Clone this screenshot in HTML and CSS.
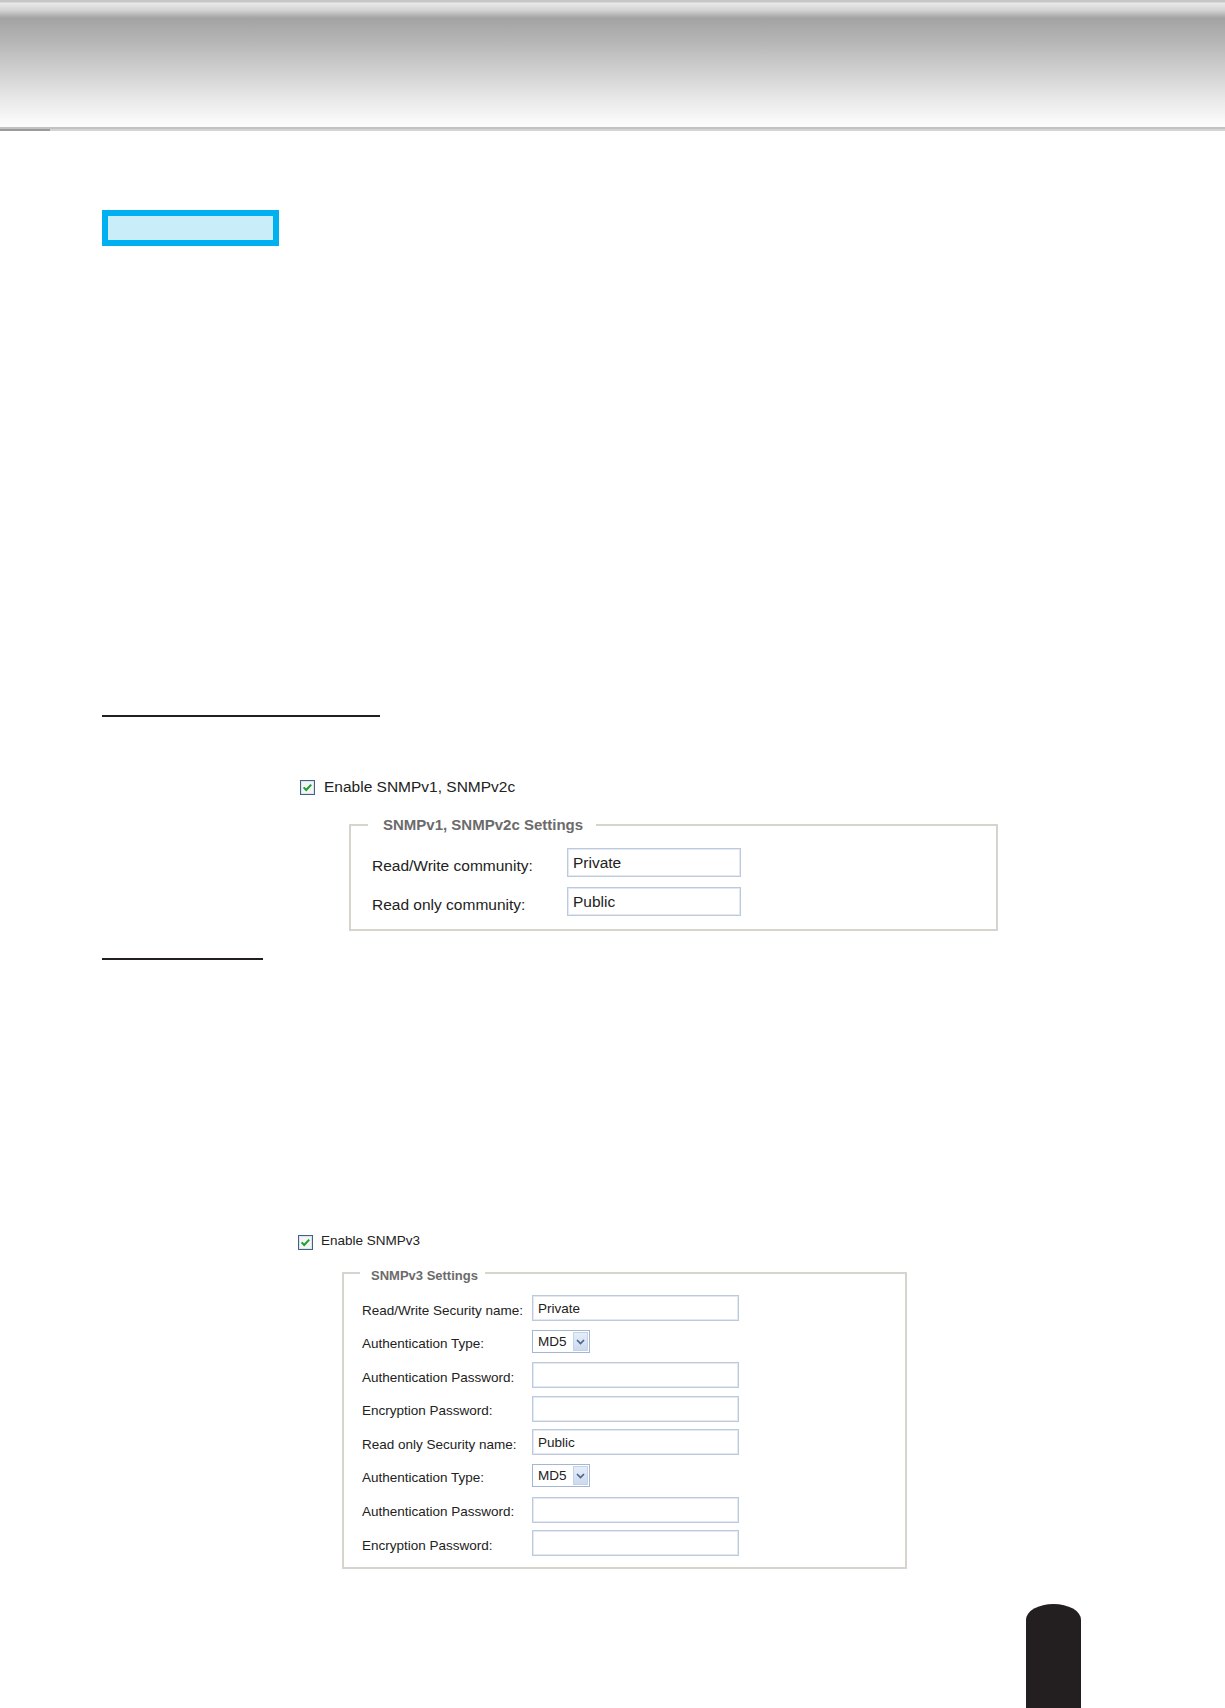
FILE: index.html
```html
<!DOCTYPE html>
<html>
<head>
    <title>SNMP Settings</title>
    <meta charset="UTF-8">
    <meta name="viewport" content="width=device-width, initial-scale=1.0">
    <link rel="stylesheet" href="styles.css">
</head>
<body>
    <header class="banner"></header>
    <div class="banner-edge"></div>

    <main class="page">
        <div class="tag-box"></div>

        <div class="heading-rule heading-rule--wide"></div>

        <label class="option option--large">
            <svg class="check" width="15" height="15" viewBox="0 0 15 15">
                <rect x="0.5" y="0.5" width="14" height="14" fill="#f3f4f6" stroke="#3f6384"/>
                <rect x="1.5" y="1.5" width="12" height="12" fill="none" stroke="#dfe4ea"/>
                <path d="M3.6 7.4 L6.2 10 L11.2 4.6" fill="none" stroke="#1f9e2a" stroke-width="2"/>
            </svg>
            <span>Enable SNMPv1, SNMPv2c</span>
        </label>

        <fieldset class="group group--v2">
            <legend>SNMPv1, SNMPv2c Settings</legend>
            <div class="form-grid">
                <label for="rwCommunity">Read/Write community:</label>
                <input type="text" id="rwCommunity" value="Private" readonly>
                <label for="roCommunity">Read only community:</label>
                <input type="text" id="roCommunity" value="Public" readonly>
            </div>
        </fieldset>

        <div class="heading-rule heading-rule--short"></div>

        <label class="option option--small">
            <svg class="check" width="15" height="15" viewBox="0 0 15 15">
                <rect x="0.5" y="0.5" width="14" height="14" fill="#f3f4f6" stroke="#3f6384"/>
                <rect x="1.5" y="1.5" width="12" height="12" fill="none" stroke="#dfe4ea"/>
                <path d="M3.6 7.4 L6.2 10 L11.2 4.6" fill="none" stroke="#1f9e2a" stroke-width="2"/>
            </svg>
            <span>Enable SNMPv3</span>
        </label>

        <fieldset class="group group--v3">
            <legend>SNMPv3 Settings</legend>
            <div class="form-grid">
                <label for="rwName">Read/Write Security name:</label>
                <input type="text" id="rwName" value="Private" readonly>

                <label>Authentication Type:</label>
                <div class="select">
                    <span class="select-value">MD5</span>
                    <span class="select-arrow">
                        <svg width="9" height="6" viewBox="0 0 9 6"><path d="M1 1 L4.5 4.5 L8 1" fill="none" stroke="#4c6389" stroke-width="1.6"/></svg>
                    </span>
                </div>

                <label for="rwAuthPw">Authentication Password:</label>
                <input type="text" id="rwAuthPw" readonly>

                <label for="rwEncPw">Encryption Password:</label>
                <input type="text" id="rwEncPw" readonly>

                <label for="roName">Read only Security name:</label>
                <input type="text" id="roName" value="Public" readonly>

                <label>Authentication Type:</label>
                <div class="select">
                    <span class="select-value">MD5</span>
                    <span class="select-arrow">
                        <svg width="9" height="6" viewBox="0 0 9 6"><path d="M1 1 L4.5 4.5 L8 1" fill="none" stroke="#4c6389" stroke-width="1.6"/></svg>
                    </span>
                </div>

                <label for="roAuthPw">Authentication Password:</label>
                <input type="text" id="roAuthPw" readonly>

                <label for="roEncPw">Encryption Password:</label>
                <input type="text" id="roEncPw" readonly>
            </div>
        </fieldset>

        <div class="page-tab"></div>
    </main>
</body>
</html>
```

FILE: styles.css
```css
:root {
    --ink: #231f20;
    --text: #222222;
    --legend: #6b6b6b;
    --frame: #d6d4cd;
    --field: #bccadf;
    --field-inner: #e4e9f1;
}

html, body {
    overflow: hidden;
}

body {
    margin: 0;
    font-family: "Liberation Sans", Arial, sans-serif;
    color: var(--text);
    background: #fff;
}

/* top banner */
.banner {
    height: 127px;
    background: linear-gradient(to bottom,
        #c6c6c6 0, #c6c6c6 2px,
        #e9e9e9 3px, #d4d4d4 10px,
        #a3a3a3 18px, #b4b4b4 40px,
        #cfcfcf 70px, #e9e9e9 100px,
        #fafafa 122px, #fcfcfc 127px);
    border-bottom: 2px solid #c2c2c2;
}

.banner-edge {
    height: 2px;
    background: linear-gradient(to right, #9b9b9b 0, #9b9b9b 50px, #d4d4d4 50px);
}

.page {
    padding-left: 102px;
}

.tag-box {
    width: 177px;
    height: 36px;
    margin-top: 79px;
    box-sizing: border-box;
    border: 6px solid #00b0f0;
    background: #c9eefa;
}

.heading-rule {
    height: 0;
    border-bottom: 2px solid var(--ink);
}

.heading-rule--wide {
    width: 278px;
    margin-top: 469px;
}

.heading-rule--short {
    width: 161px;
    margin-top: 27px;
}

/* checkbox rows */
.option {
    display: flex;
    align-items: flex-start;
    width: max-content;
}

.option .check {
    flex: none;
}

.option--large {
    margin-top: 61px;
    margin-left: 198px;
    height: 18px;
    font-size: 15.5px;
    line-height: 18px;
}

.option--large .check {
    margin-top: 2px;
    margin-right: 9px;
}

.option--small {
    margin-top: 273px;
    margin-left: 196px;
    height: 16px;
    font-size: 13.5px;
    line-height: 16px;
}

.option--small .check {
    margin-top: 2px;
    margin-right: 8px;
}

/* settings groups */
.group {
    box-sizing: border-box;
    min-width: 0;
    margin: 0;
    border: 2px solid var(--frame);
}

.group legend {
    font-weight: bold;
    color: var(--legend);
}

.group--v2 {
    width: 649px;
    margin-top: 20px;
    margin-left: 247px;
    padding: 15px 20px 13px 21px;
}

.group--v2 legend {
    margin-left: -4px;
    padding: 0 13px 0 15px;
    font-size: 15px;
    line-height: 17px;
}

.group--v3 {
    width: 565px;
    margin-top: 14px;
    margin-left: 240px;
    padding: 12px 18px 11px 18px;
}

.group--v3 legend {
    margin-left: -2px;
    padding: 5px 7px 0 11px;
    font-size: 13px;
    line-height: 15px;
}

.form-grid {
    display: grid;
    align-items: center;
}

.group--v2 .form-grid {
    grid-template-columns: 195px 174px;
    grid-auto-rows: 29px;
    row-gap: 10px;
    font-size: 15.5px;
}

.group--v2 .form-grid label {
    margin-top: 6px;
}

.group--v3 .form-grid {
    grid-template-columns: 170px 207px;
    grid-auto-rows: 26px;
    row-gap: 7.6px;
    font-size: 13.5px;
}

.group--v3 .form-grid label {
    margin-top: 4px;
}

.form-grid label {
    white-space: nowrap;
    color: var(--text);
}

.form-grid input {
    box-sizing: border-box;
    width: 100%;
    height: 100%;
    margin: 0;
    border: 1px solid var(--field);
    box-shadow: inset 0 0 0 1px var(--field-inner);
    background: #fff;
    font-family: inherit;
    font-size: inherit;
    color: var(--text);
    outline: none;
}

.group--v2 .form-grid input {
    padding: 0 4px 0 5px;
}

.group--v3 .form-grid input {
    padding: 0 5px 0 5px;
}

/* fake select */
.select {
    box-sizing: border-box;
    display: flex;
    align-items: center;
    justify-content: space-between;
    width: 58px;
    height: 23px;
    border: 1px solid #a3b6d3;
    background: #fff;
    padding: 1px 1px 1px 5px;
}

.select-value {
    line-height: 16px;
}

.select-arrow {
    display: flex;
    align-items: center;
    justify-content: center;
    width: 15px;
    height: 19px;
    box-sizing: border-box;
    border: 1px solid #c4d3e8;
    background: linear-gradient(to bottom, #e6edf8, #ccdaee);
}

/* page number tab */
.page-tab {
    width: 55px;
    height: 104px;
    margin-top: 35px;
    margin-left: 924px;
    background: var(--ink);
    border-radius: 28px 28px 0 0 / 16px 16px 0 0;
}
```
